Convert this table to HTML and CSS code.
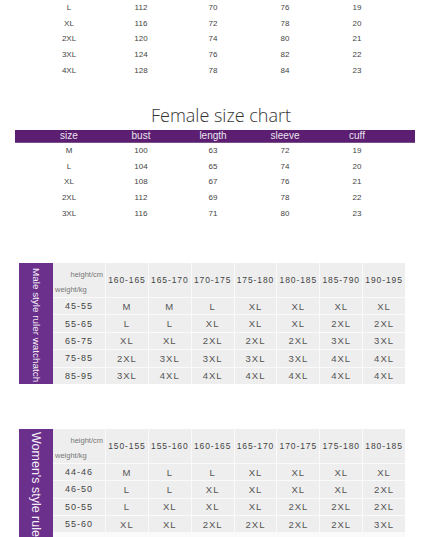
FILE: index.html
```html
<!DOCTYPE html>
<html lang="en">
<head>
    <meta charset="UTF-8">
    <meta name="viewport" content="width=device-width, initial-scale=1.0">
    <title>Size chart</title>
    <link rel="stylesheet" href="styles.css">
</head>
<body>
    <div class="chart chart-top">
        <div class="chart-row"><span>L</span><span>112</span><span>70</span><span>76</span><span>19</span></div>
        <div class="chart-row"><span>XL</span><span>116</span><span>72</span><span>78</span><span>20</span></div>
        <div class="chart-row"><span>2XL</span><span>120</span><span>74</span><span>80</span><span>21</span></div>
        <div class="chart-row"><span>3XL</span><span>124</span><span>76</span><span>82</span><span>22</span></div>
        <div class="chart-row"><span>4XL</span><span>128</span><span>78</span><span>84</span><span>23</span></div>
    </div>

    <h2 class="chart-title">Female size chart</h2>
    <div class="chart">
        <div class="chart-row chart-head"><span>size</span><span>bust</span><span>length</span><span>sleeve</span><span>cuff</span></div>
        <div class="chart-row"><span>M</span><span>100</span><span>63</span><span>72</span><span>19</span></div>
        <div class="chart-row"><span>L</span><span>104</span><span>65</span><span>74</span><span>20</span></div>
        <div class="chart-row"><span>XL</span><span>108</span><span>67</span><span>76</span><span>21</span></div>
        <div class="chart-row"><span>2XL</span><span>112</span><span>69</span><span>78</span><span>22</span></div>
        <div class="chart-row"><span>3XL</span><span>116</span><span>71</span><span>80</span><span>23</span></div>
    </div>

    <div class="ruler ruler-male">
        <div class="ruler-side">Male style ruler watchatch</div>
        <div class="ruler-grid">
            <div class="corner"><span class="unit-h">height/cm</span><span class="unit-w">weight/kg</span></div>
            <div class="range">160-165</div><div class="range">165-170</div><div class="range">170-175</div><div class="range">175-180</div><div class="range">180-185</div><div class="range">185-790</div><div class="range">190-195</div>
            <div class="weight">45-55</div><div>M</div><div>M</div><div>L</div><div>XL</div><div>XL</div><div>XL</div><div>XL</div>
            <div class="weight">55-65</div><div>L</div><div>L</div><div>XL</div><div>XL</div><div>XL</div><div>2XL</div><div>2XL</div>
            <div class="weight">65-75</div><div>XL</div><div>XL</div><div>2XL</div><div>2XL</div><div>2XL</div><div>3XL</div><div>3XL</div>
            <div class="weight">75-85</div><div>2XL</div><div>3XL</div><div>3XL</div><div>3XL</div><div>3XL</div><div>4XL</div><div>4XL</div>
            <div class="weight">85-95</div><div>3XL</div><div>4XL</div><div>4XL</div><div>4XL</div><div>4XL</div><div>4XL</div><div>4XL</div>
        </div>
    </div>

    <div class="ruler ruler-female">
        <div class="ruler-side">Women's style rule</div>
        <div class="ruler-grid">
            <div class="corner"><span class="unit-h">height/cm</span><span class="unit-w">weight/kg</span></div>
            <div class="range">150-155</div><div class="range">155-160</div><div class="range">160-165</div><div class="range">165-170</div><div class="range">170-175</div><div class="range">175-180</div><div class="range">180-185</div>
            <div class="weight">44-46</div><div>M</div><div>L</div><div>L</div><div>XL</div><div>XL</div><div>XL</div><div>XL</div>
            <div class="weight">46-50</div><div>L</div><div>L</div><div>XL</div><div>XL</div><div>XL</div><div>XL</div><div>2XL</div>
            <div class="weight">50-55</div><div>L</div><div>XL</div><div>XL</div><div>XL</div><div>2XL</div><div>2XL</div><div>2XL</div>
            <div class="weight">55-60</div><div>XL</div><div>XL</div><div>2XL</div><div>2XL</div><div>2XL</div><div>2XL</div><div>3XL</div>
        </div>
    </div>
</body>
</html>
```
FILE: styles.css
```css
* {
    box-sizing: border-box;
}

body {
    margin: 0;
    background: #fff;
    font-family: "Liberation Sans", Arial, sans-serif;
    color: #444;
}

.chart {
    width: 400px;
    margin-left: 15px;
}

.chart-row {
    display: grid;
    grid-template-columns: repeat(5, 72px);
    padding-left: 18px;
    height: 15.6px;
    align-items: center;
    justify-items: center;
    font-size: 8px;
    color: #444;
}

.chart-head {
    height: 13px;
    background: #5b1e70;
    color: #ece4f0;
    font-size: 10px;
    border-bottom: 1px solid #7a4f8a;
}

.chart-title {
    margin: 24px 0 0;
    padding-left: 12px;
    height: 28px;
    text-align: center;
    font-family: "Open Sans", sans-serif;
    font-weight: 300;
    font-size: 18px;
    line-height: 26px;
    color: #333;
}

.ruler {
    display: flex;
    width: 386px;
    margin-left: 19px;
}

.ruler-male {
    margin-top: 42px;
}

.ruler-female {
    margin-top: 45px;
}

.ruler-side {
    width: 34px;
    background: #6b2f8c;
    color: #f4eef7;
    writing-mode: vertical-rl;
    font-size: 9.9px;
    line-height: 34px;
    padding-top: 5px;
    white-space: nowrap;
    overflow: hidden;
}

.ruler-female .ruler-side {
    font-size: 12.5px;
    padding-top: 3px;
}

.ruler-grid {
    flex: 1;
    display: grid;
    grid-template-columns: 52px repeat(7, 1fr);
    grid-template-rows: 34px;
    grid-auto-rows: 16.4px;
    gap: 1px;
    background: #fafafa;
}

.ruler-grid > div {
    background: #eeeeee;
    display: flex;
    align-items: center;
    justify-content: center;
    font-size: 9.5px;
    letter-spacing: 1px;
    color: #555;
}

.ruler-grid > .range {
    font-size: 8.5px;
    letter-spacing: 0.9px;
    color: #444;
}

.ruler-grid > .weight {
    font-size: 9px;
    letter-spacing: 1px;
    color: #444;
}

.ruler-grid > .corner {
    flex-direction: column;
    align-items: stretch;
    justify-content: space-between;
    padding: 7px 2px 3px 2px;
    font-size: 7.5px;
    letter-spacing: 0;
    color: #777;
}

.unit-h {
    align-self: flex-end;
}

.unit-w {
    align-self: flex-start;
}
```
